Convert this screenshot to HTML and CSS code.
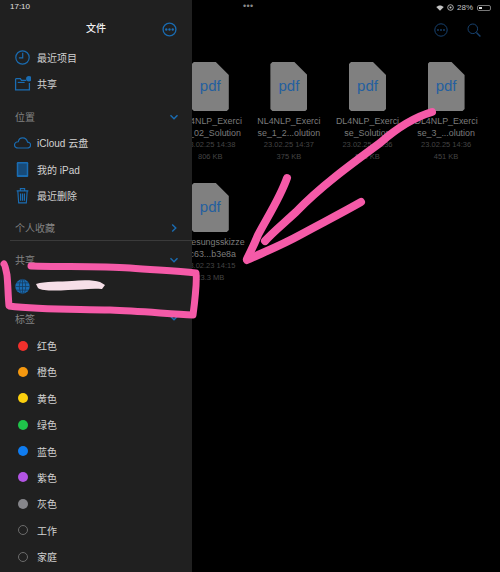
FILE: index.html
```html
<!DOCTYPE html>
<html lang="zh">
<head>
    <meta charset="UTF-8">
    <title>文件</title>
    <link rel="stylesheet" href="styles.css">
</head>
<body>
<div class="screen">

    <!-- Sidebar -->
    <aside class="sidebar">
        <div class="status-time">17:10</div>
        <div class="side-title">
            <span>文件</span>
            <svg class="title-more" viewBox="0 0 14 14"><circle cx="7" cy="7" r="6" fill="none" stroke="currentColor" stroke-width="1.2"/><circle cx="4" cy="7" r="1.1" fill="currentColor"/><circle cx="7" cy="7" r="1.1" fill="currentColor"/><circle cx="10" cy="7" r="1.1" fill="currentColor"/></svg>
        </div>

        <div class="row">
            <svg class="row-icon" viewBox="0 0 16 16"><circle cx="8" cy="8" r="6.3" fill="none" stroke="currentColor" stroke-width="1.1"/><path d="M8.2 3.6V8.4H4.6" fill="none" stroke="currentColor" stroke-width="1.1"/></svg>
            <span>最近项目</span>
        </div>
        <div class="row">
            <svg class="row-icon" viewBox="0 0 16 16"><path d="M1.5 3.5H6L7 5H11.5M14.5 7.5V14H1.5V3.5" fill="none" stroke="currentColor" stroke-width="1.2"/><path d="M3.5 7H10" stroke="currentColor" stroke-width="1.1"/><circle cx="14" cy="3.6" r="2.6" fill="currentColor"/></svg>
            <span>共享</span>
        </div>

        <div class="section section-places">
            <span>位置</span>
            <svg class="chev" viewBox="0 0 10 10"><path d="M1.5 3.2 5 6.8 8.5 3.2" fill="none" stroke="currentColor" stroke-width="1.4"/></svg>
        </div>
        <div class="row">
            <svg class="row-icon" viewBox="0 0 16 16"><path d="M4 13.2H12.3C14.2 13.2 15.6 11.9 15.6 10.3 15.6 8.7 14.3 7.6 12.8 7.6 12.2 5.2 10.4 3.6 8.2 3.6 6 3.6 4.4 5.2 4 7.3 2 7.5.5 8.7.5 10.4.5 12 2 13.2 4 13.2Z" fill="none" stroke="currentColor" stroke-width="1.1"/></svg>
            <span>iCloud 云盘</span>
        </div>
        <div class="row">
            <svg class="row-icon" viewBox="0 0 16 16"><rect x="2.6" y="1" width="10.8" height="14" rx="1" fill="currentColor"/><rect x="4" y="2.4" width="8" height="10.8" fill="#174a78"/></svg>
            <span>我的 iPad</span>
        </div>
        <div class="row">
            <svg class="row-icon" viewBox="0 0 16 16"><path d="M2.5 3.6H13.5M6 3.4V1.6H10V3.4M3.6 3.8 4.4 15H11.6L12.4 3.8M6.2 6V13M8 6V13M9.8 6V13" fill="none" stroke="currentColor" stroke-width="1.1"/></svg>
            <span>最近删除</span>
        </div>

        <div class="section section-fav">
            <span>个人收藏</span>
            <svg class="chev" viewBox="0 0 10 10"><path d="M3.2 1.5 6.8 5 3.2 8.5" fill="none" stroke="currentColor" stroke-width="1.4"/></svg>
        </div>
        <div class="divider"></div>

        <div class="section section-shared">
            <span>共享</span>
            <svg class="chev" viewBox="0 0 10 10"><path d="M1.5 3.2 5 6.8 8.5 3.2" fill="none" stroke="currentColor" stroke-width="1.4"/></svg>
        </div>
        <div class="row">
            <svg class="row-icon" viewBox="0 0 16 16"><circle cx="8" cy="8" r="6.8" fill="currentColor"/><g fill="none" stroke="#16395a" stroke-width=".7"><ellipse cx="8" cy="8" rx="3" ry="6.8"/><path d="M8 1.2V14.8M1.2 8H14.8M2.2 4.6H13.8M2.2 11.4H13.8"/></g></svg>
        </div>

        <div class="section section-tags">
            <span>标签</span>
            <svg class="chev" viewBox="0 0 10 10"><path d="M1.5 3.2 5 6.8 8.5 3.2" fill="none" stroke="currentColor" stroke-width="1.4"/></svg>
        </div>
        <div class="row"><i class="dot dot-red"></i><span>红色</span></div>
        <div class="row"><i class="dot dot-orange"></i><span>橙色</span></div>
        <div class="row"><i class="dot dot-yellow"></i><span>黄色</span></div>
        <div class="row"><i class="dot dot-green"></i><span>绿色</span></div>
        <div class="row"><i class="dot dot-blue"></i><span>蓝色</span></div>
        <div class="row"><i class="dot dot-purple"></i><span>紫色</span></div>
        <div class="row"><i class="dot dot-gray"></i><span>灰色</span></div>
        <div class="row"><i class="dot dot-empty"></i><span>工作</span></div>
        <div class="row"><i class="dot dot-empty"></i><span>家庭</span></div>
    </aside>

    <!-- Files -->
    <main class="files">
        <div class="status-bar">
            <span class="handle">•••</span>
            <span class="status-right">
                <svg class="wifi" viewBox="0 0 12 9"><path d="M6 8.6 0.4 3C3.6-.2 8.4-.2 11.6 3Z" fill="currentColor"/></svg>
                <svg class="lock" viewBox="0 0 8 8"><circle cx="4" cy="4" r="3.2" fill="none" stroke="currentColor" stroke-width="1"/><circle cx="4" cy="4" r="1.2" fill="currentColor"/></svg>
                <span>28%</span>
                <span class="battery"><span class="battery-level"></span></span>
            </span>
        </div>
        <div class="toolbar">
            <svg class="tool-more" viewBox="0 0 14 14"><circle cx="7" cy="7" r="6.2" fill="none" stroke="currentColor" stroke-width="1"/><circle cx="4" cy="7" r=".9" fill="currentColor"/><circle cx="7" cy="7" r=".9" fill="currentColor"/><circle cx="10" cy="7" r=".9" fill="currentColor"/></svg>
            <svg class="tool-search" viewBox="0 0 14 14"><circle cx="5.8" cy="5.8" r="4.8" fill="none" stroke="currentColor" stroke-width="1"/><path d="M9.4 9.4 13.4 13.4" stroke="currentColor" stroke-width="1.4"/></svg>
        </div>

        <div class="grid">
            <div class="file">
                <div class="pdf">pdf</div>
                <div class="name">NL4NLP_Exerci</div>
                <div class="name">se_02_Solution</div>
                <div class="meta">23.02.25 14:38</div>
                <div class="meta">806 KB</div>
            </div>
            <div class="file">
                <div class="pdf">pdf</div>
                <div class="name">NL4NLP_Exerci</div>
                <div class="name">se_1_2...olution</div>
                <div class="meta">23.02.25 14:37</div>
                <div class="meta">375 KB</div>
            </div>
            <div class="file">
                <div class="pdf">pdf</div>
                <div class="name">DL4NLP_Exerci</div>
                <div class="name">se_Solution</div>
                <div class="meta">23.02.25 14:36</div>
                <div class="meta">518 KB</div>
            </div>
            <div class="file">
                <div class="pdf">pdf</div>
                <div class="name">DL4NLP_Exerci</div>
                <div class="name">se_3_...olution</div>
                <div class="meta">23.02.25 14:36</div>
                <div class="meta">451 KB</div>
            </div>
            <div class="file">
                <div class="pdf">pdf</div>
                <div class="name">Vorlesungsskizze</div>
                <div class="name">0c63...b3e8a</div>
                <div class="meta">23.02.23 14:15</div>
                <div class="meta">23.3 MB</div>
            </div>
        </div>
    </main>

    <!-- Hand drawn marks on top of the screenshot -->
    <svg class="marks" viewBox="0 0 500 572">
        <path class="smear" d="M36 284C45 281 60 282 72 281 82 280 94 280 100 282L105 285 102 289C90 288 80 290 68 290 55 291 42 291 38 288Z"/>
        <path class="pink box" d="M31 266C60 267 100 266 130 268 155 270 175 271 196 273 197 285 195 300 193 315 170 314 140 311 110 310 75 309 40 310 9 306 8 295 8 285 7 275 6 270 5 265 4 264"/>
        <path class="pink" d="M432 112C415 117 398 127 380 143 350 165 320 187 296 212 283 224 272 233 265 241"/>
        <path class="pink" d="M287 178C280 198 268 216 258 235 254 245 250 253 247 259"/>
        <path class="pink" d="M361 202C340 214 320 224 300 235 282 245 262 253 247 260"/>
    </svg>
</div>
</body>
</html>
```

FILE: styles.css
```css
* {
    box-sizing: border-box;
}

body {
    margin: 0;
    background: #000;
    font-family: "Liberation Sans", "Noto Sans CJK SC", sans-serif;
}

.screen {
    position: relative;
    display: flex;
    width: 500px;
    height: 572px;
    overflow: hidden;
}

/* Sidebar */
.sidebar {
    position: relative;
    z-index: 1;
    flex: 0 0 192px;
    height: 572px;
    background: #202020;
    color: #d2d2d2;
    font-size: 10px;
    overflow: hidden;
}

.status-time {
    height: 14px;
    padding: 2px 0 0 10px;
    font-size: 8px;
    line-height: 10px;
    color: #e0e0e0;
}

.side-title {
    position: relative;
    height: 30px;
    text-align: center;
    font-size: 10px;
    font-weight: 500;
    line-height: 30px;
    color: #f0f0f0;
}

.title-more {
    position: absolute;
    left: 162px;
    top: 7.5px;
    width: 15px;
    height: 15px;
    color: #1a6cb2;
}

.row {
    display: flex;
    align-items: center;
    height: 26.4px;
    padding-left: 14px;
}

.row span {
    margin-left: 6px;
}

.row-icon {
    flex: 0 0 17px;
    width: 17px;
    height: 17px;
    color: #1a6cb2;
}

.section {
    display: flex;
    align-items: center;
    justify-content: space-between;
    height: 20px;
    padding: 0 13px 0 15px;
    color: #828282;
}

.section-places {
    margin-top: 10px;
    margin-bottom: 3px;
}

.section-fav {
    margin-top: 9px;
}

.section-shared {
    margin-top: 9px;
    margin-bottom: 3px;
}

.section-tags {
    margin-top: 9px;
    margin-bottom: 4px;
}

.chev {
    width: 10px;
    height: 10px;
    color: #1a6cb2;
}

.divider {
    height: 1px;
    margin: 2px 0 0 10px;
    background: #3a3a3a;
}

.dot {
    flex: 0 0 10px;
    width: 10px;
    height: 10px;
    margin: 0 4px 0 4px;
    border-radius: 50%;
}

.row .dot + span {
    margin-left: 5px;
}

.dot-red { background: #f2302c; }
.dot-orange { background: #f5980f; }
.dot-yellow { background: #fbcf0e; }
.dot-green { background: #1fc44a; }
.dot-blue { background: #0f7cf0; }
.dot-purple { background: #b354e4; }
.dot-gray { background: #85858a; }
.dot-empty { border: 1px solid #6c6c6c; }

/* Files */
.files {
    flex: 1;
    min-width: 0;
}

.status-bar {
    position: relative;
    display: flex;
    justify-content: flex-end;
    height: 14px;
    padding: 1px 9px 0 0;
    color: #c4c4c4;
    font-size: 8px;
    line-height: 13px;
}

.handle {
    position: absolute;
    left: 51px;
    top: 0;
    font-size: 9px;
    color: #8a8a8a;
    letter-spacing: .4px;
}

.status-right {
    display: flex;
    align-items: center;
    gap: 3px;
}

.wifi {
    width: 8px;
    height: 6px;
}

.lock {
    width: 7px;
    height: 7px;
}

.battery {
    display: block;
    width: 14px;
    height: 6px;
    padding: 1px;
    margin-left: 1px;
    border: 1px solid #777;
    border-radius: 2px;
}

.battery-level {
    display: block;
    width: 3px;
    height: 100%;
    background: #ddd;
}

.toolbar {
    display: flex;
    justify-content: flex-end;
    align-items: center;
    gap: 19px;
    height: 31px;
    padding-right: 19px;
    color: #17416e;
}

.tool-more {
    width: 14px;
    height: 14px;
}

.tool-search {
    width: 14px;
    height: 14px;
}

.grid {
    display: grid;
    grid-template-columns: repeat(4, 78.6px);
    grid-auto-rows: 121px;
    margin: 17px 0 0 -21px;
}

.file {
    display: flex;
    flex-direction: column;
    align-items: center;
    white-space: nowrap;
}

.pdf {
    width: 37px;
    height: 49px;
    margin-bottom: 4px;
    background: #808080;
    clip-path: polygon(2px 0, 24px 0, 37px 13px, 37px 47px, 35px 49px, 2px 49px, 0 47px, 0 2px);
    color: #245f9f;
    font-size: 15px;
    line-height: 47px;
    text-align: center;
}

.name {
    height: 12px;
    color: #7c7c7c;
    font-size: 8.9px;
    line-height: 12px;
}

.meta {
    height: 11.5px;
    color: #444;
    font-size: 7.5px;
    line-height: 11.5px;
}

/* Pen marks */
.marks {
    position: absolute;
    left: 0;
    top: 0;
    z-index: 2;
    width: 500px;
    height: 572px;
}

.pink {
    fill: none;
    stroke: #f55aa8;
    stroke-width: 8;
    stroke-linecap: round;
    stroke-linejoin: round;
}

.box {
    stroke-width: 7;
}

.smear {
    fill: #f6dfe8;
}
```
